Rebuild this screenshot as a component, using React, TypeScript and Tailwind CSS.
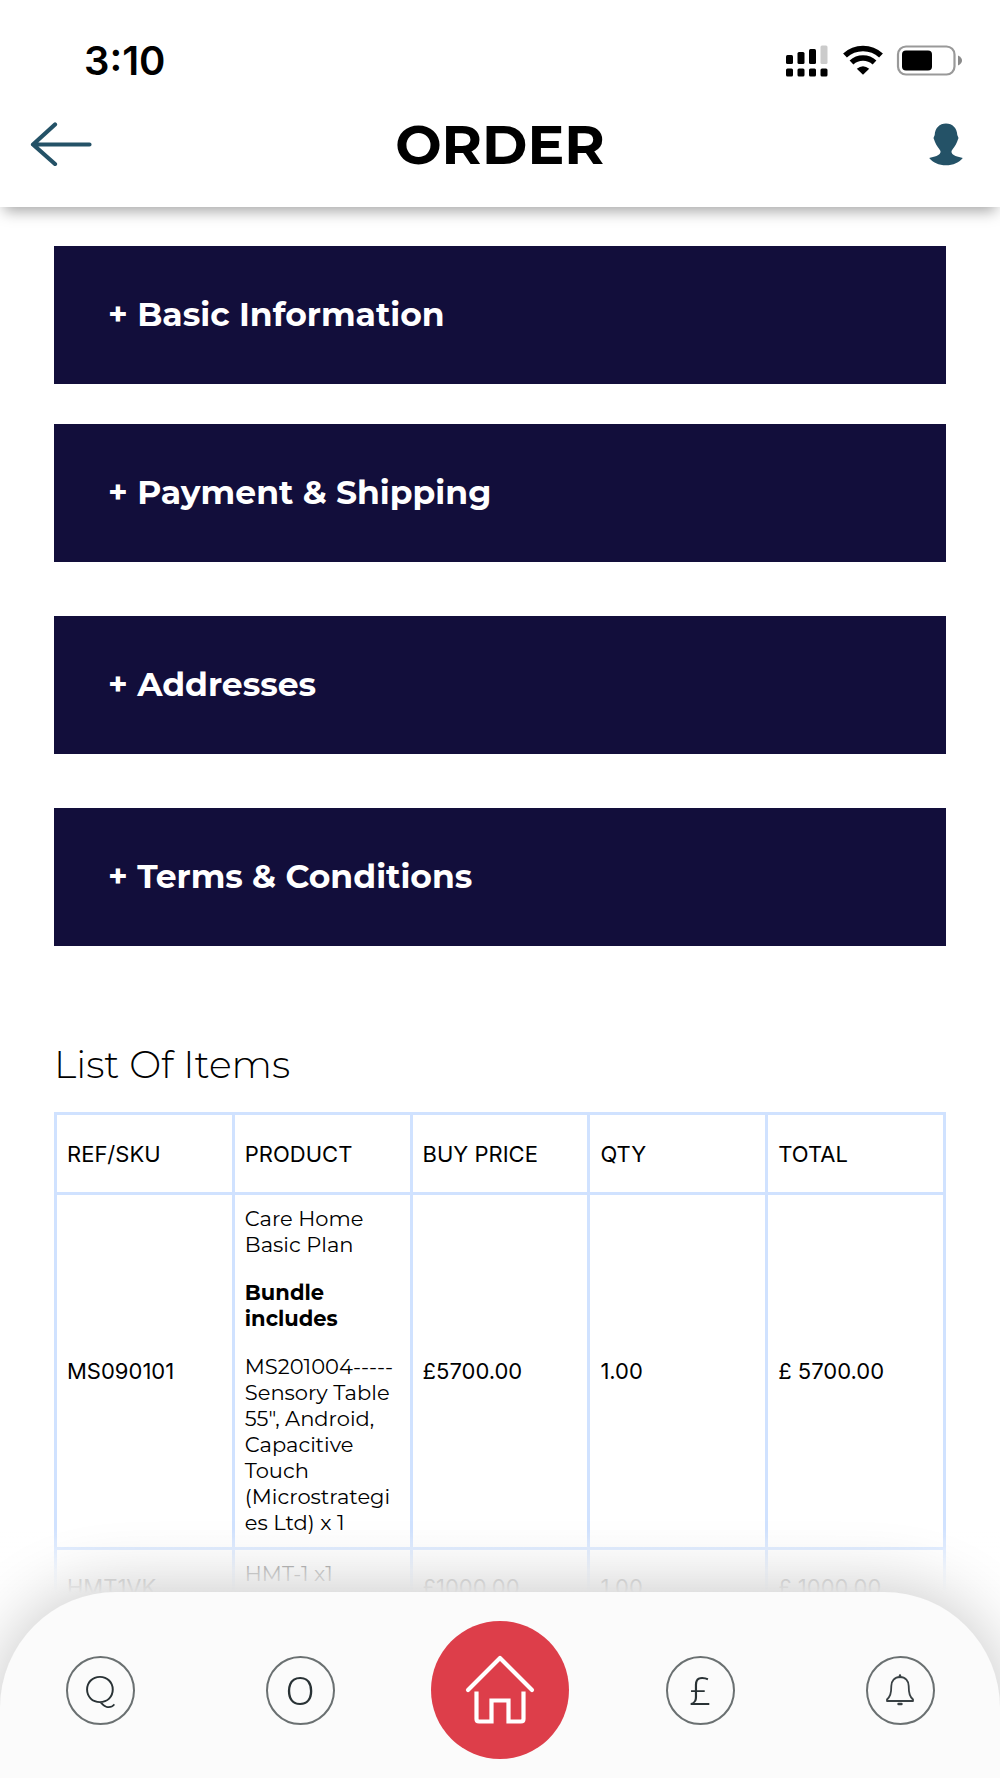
import { useState } from "react";

type OrderItem = {
  sku: string;
  product: string[];
  bundle: boolean;
  price: string;
  qty: string;
  total: string;
};

const sections = [
  { title: "Basic Information", gap: "mb-10" },
  { title: "Payment & Shipping", gap: "mb-[54px]" },
  { title: "Addresses", gap: "mb-[54px]" },
  { title: "Terms & Conditions", gap: "mb-[94px]" },
];

const columns = ["REF/SKU", "PRODUCT", "BUY PRICE", "QTY", "TOTAL"];

const items: OrderItem[] = [
  {
    sku: "MS090101",
    product: [
      "Care Home Basic Plan",
      'MS201004----- Sensory Table 55", Android, Capacitive Touch (Microstrategies Ltd) x 1',
    ],
    bundle: true,
    price: "£5700.00",
    qty: "1.00",
    total: "£ 5700.00",
  },
  {
    sku: "HMT1VK",
    product: ["HMT-1 x1 Validation Kit"],
    bundle: false,
    price: "£1000.00",
    qty: "1.00",
    total: "£ 1000.00",
  },
];

function StatusBar() {
  return (
    <div className="flex h-[122px] items-center justify-between pr-[38px] pl-[84px]">
      <span className="font-['Inter',sans-serif] text-[40px] leading-[48px] font-semibold">3:10</span>
      <svg width="178" height="32" viewBox="0 0 178 32" aria-hidden="true">
        <g>
          <rect x="2" y="10" width="7" height="9" rx="1.5" />
          <rect x="13.5" y="7" width="7" height="12" rx="1.5" />
          <rect x="25" y="4" width="7" height="15" rx="1.5" />
          <rect x="36.5" y="0.5" width="7" height="18.5" rx="1.5" fill="#cbcbcb" />
          <rect x="2" y="23.5" width="7" height="8" rx="1.5" />
          <rect x="13.5" y="23.5" width="7" height="8" rx="1.5" />
          <rect x="25" y="23.5" width="7" height="8" rx="1.5" />
          <rect x="36.5" y="23.5" width="7" height="8" rx="1.5" />
        </g>
        <g fill="none" stroke="#000" strokeWidth="5.6">
          <path d="M61 10.5 A26.5 26.5 0 0 1 97 10.5" />
          <path d="M67.5 17.5 A17 17 0 0 1 90.5 17.5" />
        </g>
        <path d="M79 29.7 L72.8 23.7 Q79 18.6 85.2 23.7 Z" />
        <rect x="114" y="1.5" width="56.5" height="28" rx="8" fill="none" stroke="#999" strokeWidth="2.2" />
        <rect x="118" y="5.5" width="30" height="20" rx="4" />
        <path d="M174 10.5 Q178 12.5 178 15.5 Q178 18.5 174 20.5 Z" fill="#8a8a8a" />
      </svg>
    </div>
  );
}

function Header() {
  return (
    <header className="relative z-10 bg-white shadow-[0_8px_14px_-4px_rgba(0,0,0,0.36)]">
      <StatusBar />
      <div className="flex h-[85px] items-start justify-between pr-[37px] pl-[30px]">
        <button type="button" aria-label="Back" className="w-[69px]">
          <svg width="62" height="44" viewBox="0 0 62 44" fill="none" stroke="#245267" strokeWidth="4.2" strokeLinecap="round" strokeLinejoin="round">
            <path d="M59.5 22.5 H3 M25 2.5 L3 22.5 L25 42" />
          </svg>
        </button>
        <h1 className="text-[55px] leading-[46px] font-bold">ORDER</h1>
        <button type="button" aria-label="Account" className="flex w-[62px] justify-end">
          <svg width="34" height="44" viewBox="0 0 34 44" fill="#245267">
            <path d="M17 1.5 C23.5 1.5 28 6 28.3 13 L29.5 16 L28 20 C26.5 24 24 26.500 22.500 29 C22 31 24 33 26.500 34 C28.500 34.800 31.500 35 33.800 36 C30.500 40.500 24 43.300 17 43.300 C10 43.300 3.500 40.500 0.200 36 C2.500 35 5.500 34.800 7.500 34 C10 33 12 31 11.500 29 C10 26.500 7.500 24 6 20 L4.500 16 L5.700 13 C6 6 10.500 1.500 17 1.500 Z" />
          </svg>
        </button>
      </div>
    </header>
  );
}

const cell = "border-3 border-[#d0e2ff] px-[10px]";

function ItemsTable() {
  return (
    <table className="w-full table-fixed border-collapse text-left font-['Inter',sans-serif] text-[22px] leading-[26px]">
      <thead>
        <tr className="h-20">
          {columns.map((column) => (
            <th key={column} className={`${cell} font-normal`}>
              {column}
            </th>
          ))}
        </tr>
      </thead>
      <tbody>
        {items.map((item) => (
          <tr key={item.sku}>
            <td className={cell}>{item.sku}</td>
            <td className={`${cell} py-[11px] font-['Montserrat','Inter',sans-serif] text-[21px] wrap-anywhere`}>
              <p>{item.product[0]}</p>
              {item.bundle && (
                <>
                  <p className="my-[22px] font-bold">Bundle includes</p>
                  <p>{item.product[1]}</p>
                </>
              )}
            </td>
            <td className={cell}>{item.price}</td>
            <td className={cell}>{item.qty}</td>
            <td className={cell}>{item.total}</td>
          </tr>
        ))}
      </tbody>
    </table>
  );
}

const navButton =
  "flex size-[69px] items-center justify-center rounded-full border-2 border-[#6a7071] text-[38px] leading-none font-light text-[#293235]";

function BottomNav() {
  return (
    <nav className="fixed inset-x-0 bottom-0 z-10 grid h-[186px] grid-cols-5 items-center justify-items-center rounded-t-[116px] bg-[#fbfbfb] pt-[10px] shadow-[0_0_70px_rgba(0,0,0,0.24)]">
      <button type="button" aria-label="Quotes" className={navButton}>
        Q
      </button>
      <button type="button" aria-label="Orders" className={`${navButton} font-['Noto_Sans',sans-serif]`}>
        O
      </button>
      <button type="button" aria-label="Home" className="flex size-[138px] items-center justify-center rounded-full bg-[#dd3e4a]">
        <svg width="70" height="70" viewBox="0 0 70 70" fill="none" stroke="#fff" strokeWidth="4.2">
          <path d="M3 35 L35 3 L67 35" strokeLinecap="round" strokeLinejoin="round" />
          <path d="M11.5 36.5 V64 Q11.5 66.5 14 66.5 H26.5 V45.5 H43.5 V66.5 H56 Q58.5 66.5 58.5 64 V36.5" />
        </svg>
      </button>
      <button type="button" aria-label="Invoices" className={`${navButton} font-['Noto_Sans',sans-serif]`}>
        £
      </button>
      <button type="button" aria-label="Notifications" className={navButton}>
        <svg width="30" height="32" viewBox="0 0 30 32" fill="none" stroke="#394144" strokeWidth="1.8" strokeLinejoin="round">
          <path d="M15 3 C9.5 3 6.3 7 6.3 12 C6.3 20 5 22.5 2 25.5 V27 H28 V25.5 C25 22.5 23.7 20 23.7 12 C23.7 7 20.5 3 15 3 Z" />
          <path d="M15 1.5 V3 M13.5 30 H16.5" strokeWidth="2.4" strokeLinecap="round" />
        </svg>
      </button>
    </nav>
  );
}

export default function App() {
  const [open, setOpen] = useState<string | null>(null);

  return (
    <div className="flex h-screen flex-col overflow-hidden bg-white font-['Montserrat','Inter',sans-serif] text-black">
      <Header />

      <main className="min-h-0 flex-1 overflow-hidden px-[54px] pt-[39px]">
        {sections.map(({ title, gap }) => (
          <button
            key={title}
            type="button"
            aria-expanded={open === title}
            onClick={() => setOpen(open === title ? null : title)}
            className={`block h-[138px] w-full bg-[#120e3b] px-[54px] text-left text-[33px] font-bold text-white ${gap}`}
          >
            {open === title ? "-" : "+"} {title}
          </button>
        ))}

        <h2 className="mb-[22px] text-[38px] leading-[50px] font-light">List Of Items</h2>
        <ItemsTable />
      </main>

      {/* fades the list out behind the nav */}
      <div className="pointer-events-none fixed inset-x-0 bottom-0 h-[250px] bg-linear-to-t from-white from-74% via-white/80 via-83% to-transparent" />
      <BottomNav />
    </div>
  );
}
